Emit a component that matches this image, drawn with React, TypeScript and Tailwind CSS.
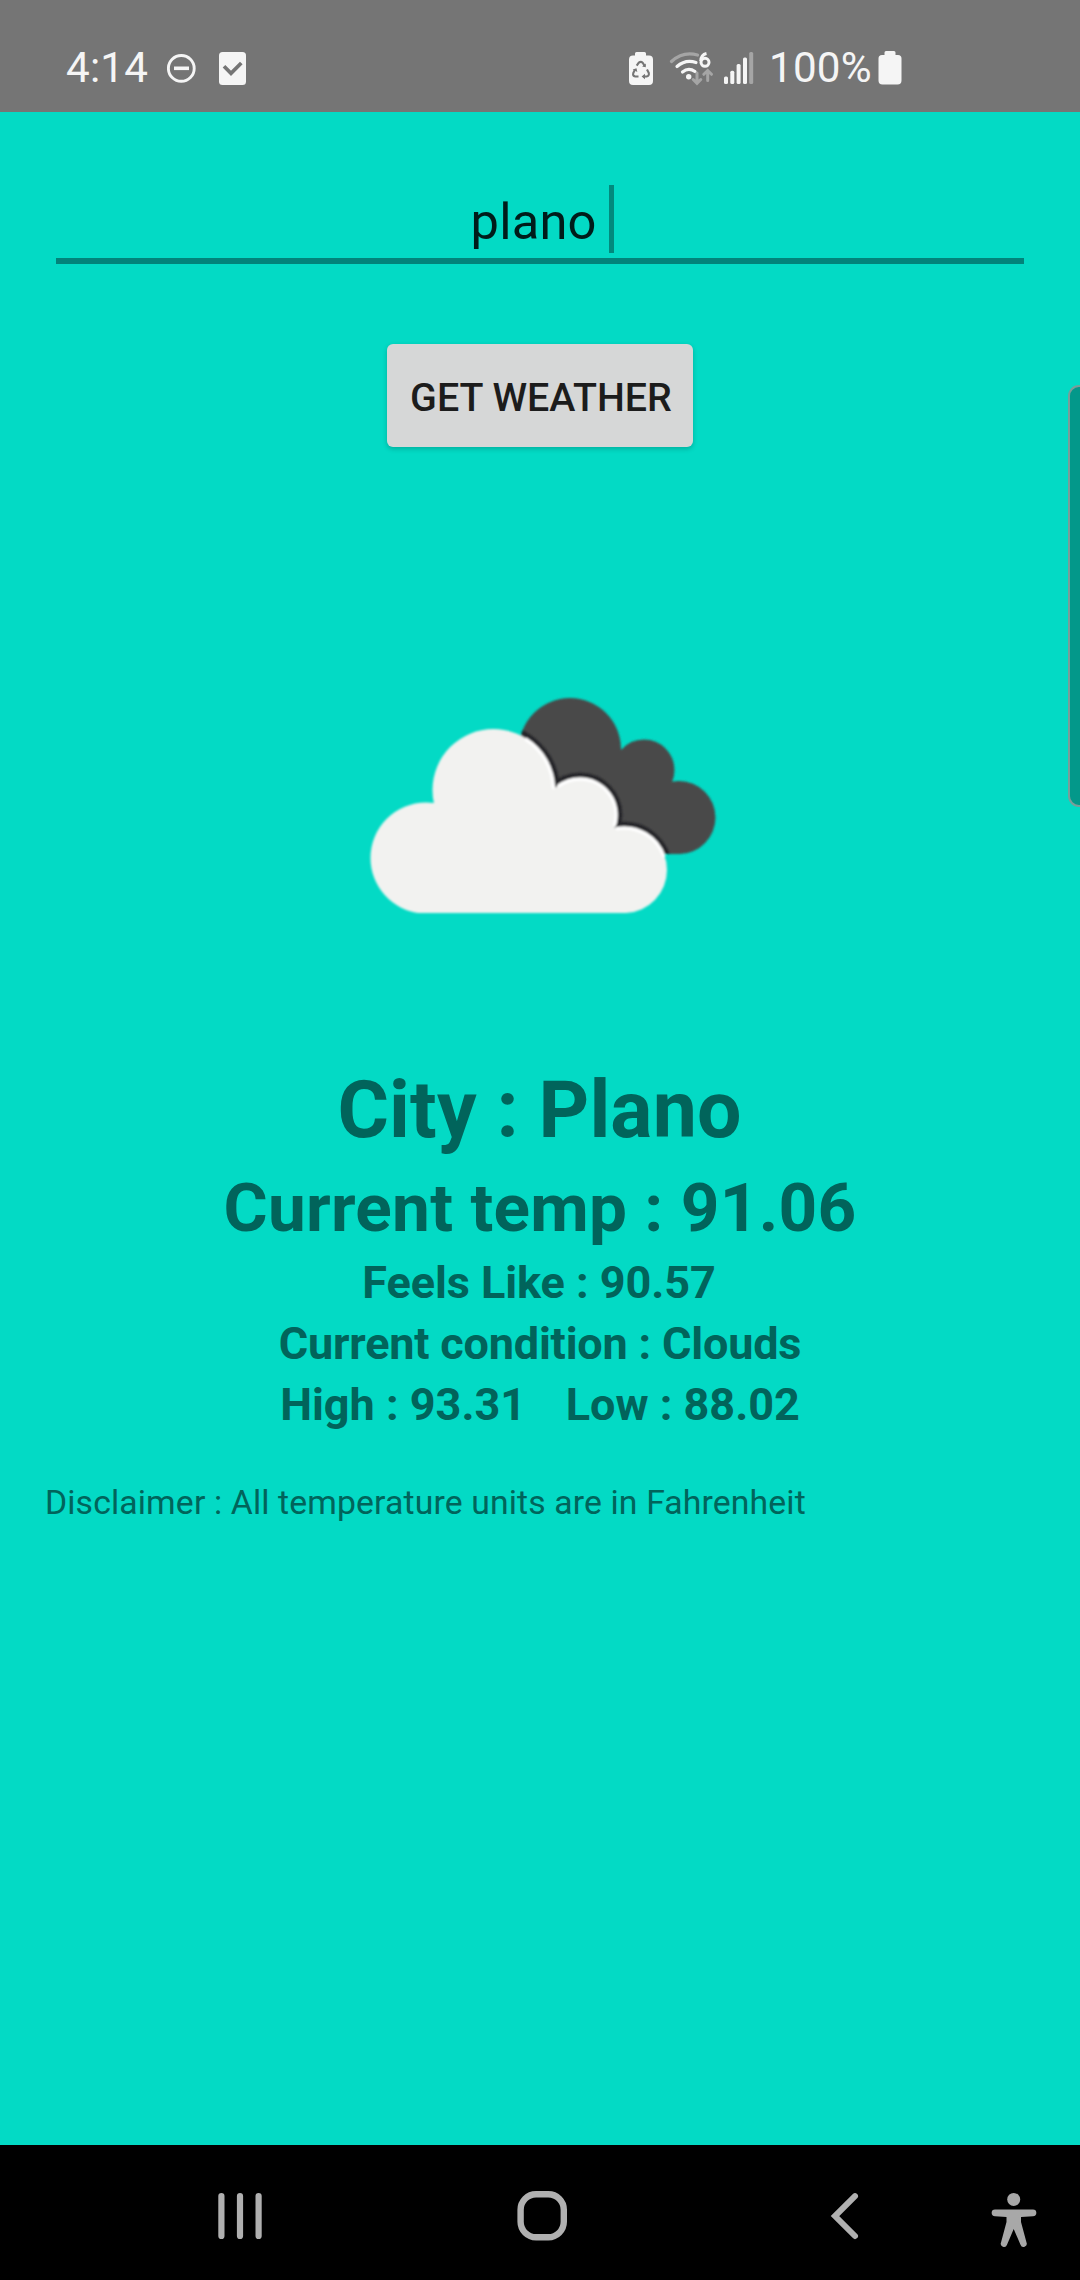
import React from "react";

function StatusBar() {
  return (
    <header className="flex h-[112px] bg-[#757575] pl-[66px] pt-[42px] text-[42.2px] leading-[51px] text-[#f5f5f5]">
      <span className="w-[82px] tracking-[0.2px]">4:14</span>
      <svg className="ml-[19px] mt-[12px] h-[30px] w-[30px]" viewBox="0 0 30 30" fill="none" stroke="#f5f5f5">
        <circle cx="14.3" cy="14.4" r="12.9" strokeWidth="2.9" />
        <path d="M7 14.3H22" strokeWidth="3.6" />
      </svg>
      <svg className="ml-[21px] mt-[9px] h-[34px] w-[28px]" viewBox="0 0 28 34">
        <rect x="1" y="1" width="27" height="33" rx="3.5" fill="#f5f5f5" />
        <path d="M6 15.3 13 22.3 23.3 12" fill="none" stroke="#757575" strokeWidth="3.7" />
      </svg>
      <svg className="ml-[382px] mt-[9px] h-[35px] w-[26px]" viewBox="0 0 26 35">
        <path d="M7 5V2.5Q7 1 8.500 1H16.500Q18 1 18 2.500V4.500H21Q25 4.500 25 8.500V30Q25 34 21 34H5Q1 34 1 30V8.500Q1 4.500 5 4.500H7Z" fill="#f5f5f5" />
        <g fill="none" stroke="#757575" strokeWidth="2.1" strokeLinejoin="round">
          <path d="M8.700 14.700 10.800 11.700Q12.800 10.200 14.700 11.700L16.700 15" />
          <path d="M19 18.500 20.800 22Q21.300 25.200 18.500 25.500H15.500" />
          <path d="M10.500 25.500H7.200Q4.400 25 5.300 22L7 18.500" />
        </g>
        <path d="M17.800 12.500V16.300L14.100 15.500ZM17 22.700V28.300L13.600 25.500ZM4.700 18.400 8.500 17.200 9.300 21Z" fill="#757575" />
      </svg>
      <svg className="ml-[14px] mt-[9px] h-[36px] w-[46px]" viewBox="0 0 46 36" fill="none" strokeLinecap="round">
        <path d="M3.500 10.500Q15 0 29.500 4" stroke="#a5a5a5" strokeWidth="3.200" />
        <g stroke="#f5f5f5" strokeWidth="3.200">
          <path d="M9 15.500Q17.500 8 28 11.500" />
          <path d="M14.500 21Q20.500 16 27 20.500" />
        </g>
        <circle cx="20.700" cy="25.700" r="2.700" fill="#f5f5f5" />
        <path d="M38.500 2.500Q33 3.700 32.800 10" stroke="#f5f5f5" strokeWidth="3" strokeLinecap="butt" />
        <circle cx="37" cy="11.300" r="4" stroke="#f5f5f5" strokeWidth="3" />
        <path d="M29 22V31M25.200 28.500 29 32.300 32.800 28.500M39.700 29.500V21M35.800 23.300 39.700 19.500 43.500 23.300" stroke="#a5a5a5" strokeWidth="3" />
      </svg>
      <svg className="ml-[9px] mt-[9px] h-[34px] w-[31px]" viewBox="0 0 31 34">
        <g fill="#f5f5f5">
          <rect x="1" y="25.500" width="4" height="7.500" rx="1.500" />
          <rect x="7.300" y="19.700" width="4" height="13.300" rx="1.500" />
          <rect x="13.600" y="13" width="4" height="20" rx="1.500" />
          <rect x="20" y="6.500" width="4" height="26.500" rx="1.500" />
        </g>
        <rect x="26.200" y="1" width="4" height="32" rx="1.500" fill="#a5a5a5" />
      </svg>
      <span className="ml-[15px] w-[102px] tracking-[0.2px]">100%</span>
      <svg className="ml-[7px] mt-[8px] h-[35px] w-[24px]" viewBox="0 0 24 35">
        <path d="M6.500 5V2.500Q6.500 1 8 1H16Q17.500 1 17.500 2.500V5H20Q23.500 5 23.500 8.500V30.500Q23.500 34.500 19.500 34.500H4.500Q.5 34.500 .5 30.500V8.500Q.5 5 4 5Z" fill="#f5f5f5" />
      </svg>
    </header>
  );
}

function CloudsIcon() {
  return (
    <svg className="mx-auto mt-[233px] h-[250px] w-[380px]" viewBox="0 0 380 250">
      <defs>
        <filter id="soften" x="-5%" y="-5%" width="110%" height="110%">
          <feGaussianBlur stdDeviation="1.2" />
        </filter>
        <clipPath id="dark-shape">
          <circle cx="220" cy="69" r="51" />
          <circle cx="294" cy="90" r="30.500" />
          <circle cx="329" cy="137.500" r="36.500" />
          <path d="M180 60H260L300 95 330 130V174H250Z" />
        </clipPath>
        <clipPath id="light-shape">
          <circle cx="76" cy="178" r="55.500" />
          <circle cx="143.500" cy="110" r="61" />
          <circle cx="230" cy="135" r="37" />
          <circle cx="274" cy="190" r="43" />
          <path d="M84 125 143 110H200L240 140 276 180V234H70V150Z" />
        </clipPath>
      </defs>
      <g filter="url(#soften)">
        <g clipPath="url(#dark-shape)">
          <rect width="380" height="250" fill="#48484a" />
          <g fill="none" stroke="#262629" strokeWidth="9">
            <circle cx="143.500" cy="110" r="62" />
            <circle cx="230" cy="135" r="38" />
            <circle cx="274" cy="190" r="44" />
          </g>
        </g>
        <g clipPath="url(#light-shape)">
          <rect width="380" height="233" fill="#f2f2f0" />
        </g>
        <g fill="none" stroke="#ffffff" strokeWidth="3.500">
          <path d="M175.300 59.100A60 60 0 0 1 203.500 109" />
          <path d="M208 106.500A36 36 0 0 1 230 99A36 36 0 0 1 264.300 146" />
          <path d="M266 148.800A42 42 0 0 1 314 177" />
        </g>
      </g>
    </svg>
  );
}

function NavigationBar() {
  return (
    <nav className="flex h-[135px] items-start bg-black pl-[217px]">
      <svg className="mt-[46px] h-[50px] w-[46px]" viewBox="0 0 46 50" stroke="#b0b0b0" strokeWidth="6.200" strokeLinecap="round">
        <path d="M4.400 5V45M23 5V45M41.600 5V45" />
      </svg>
      <svg className="ml-[253px] mt-[45px] h-[52px] w-[52px]" viewBox="0 0 52 52">
        <rect x="4.600" y="4.300" width="43.200" height="43" rx="15.500" fill="none" stroke="#b0b0b0" strokeWidth="6.400" />
      </svg>
      <svg className="ml-[262px] mt-[46px] h-[50px] w-[30px]" viewBox="0 0 30 50">
        <path d="M25 5.200 5 25 25 45" fill="none" stroke="#b0b0b0" strokeWidth="6" strokeLinecap="round" />
      </svg>
      <svg className="ml-[131px] mt-[47px] h-[56px] w-[46px]" viewBox="0 0 46 56" fill="#a8a8a8">
        <circle cx="22.700" cy="7.400" r="6.500" />
        <path d="M4 17.500H42A3.300 3.300 0 0 1 42 24.200L30 25V30L35.500 50.500A3.100 3.100 0 0 1 29.500 52.800L22.700 37 16 52.800A3.100 3.100 0 0 1 10 50.500L15.500 30V25L4 24.200A3.300 3.300 0 0 1 4 17.500Z" />
      </svg>
    </nav>
  );
}

export default function App() {
  return (
    <div className="relative flex h-[2280px] w-[1080px] flex-col overflow-hidden bg-[#03dac5] font-[Roboto,sans-serif]">
      <StatusBar />
      <main className="flex flex-1 flex-col">
        <div className="mx-[56px] mt-[73px] flex h-[79px] justify-center border-b-[6px] border-[#02837a]">
          <span className="whitespace-pre text-[50.625px] leading-[73px] tracking-[0.2px] text-[#001c1a]">{"plano "}</span>
          <span className="-mr-[5px] h-[68px] w-[5px] bg-[#028a7d]" />
        </div>
        <button className="mx-auto mt-[80px] h-[103px] w-[306px] rounded-[6px] bg-[#d6d7d7] pl-[2px] pt-[5px] text-[39.375px] font-medium leading-[98px] text-[#1c1c1c] shadow-[0_2px_5px_rgba(0,0,0,0.2)]">
          <span className="whitespace-nowrap">GET WEATHER</span>
        </button>
        <CloudsIcon />
        <section className="mt-[128px] text-center font-bold text-[#01645b]">
          <h1 className="pr-[1px] text-[78.75px] leading-[105px] tracking-[0.15px]">City : Plano</h1>
          <h2 className="text-[67.5px] leading-[90px] tracking-[0.28px]">Current temp : 91.06</h2>
          <p className="pr-[2px] text-[45px] leading-[60px] tracking-[-0.07px]">Feels Like : 90.57</p>
          <p className="text-[45px] leading-[61px] tracking-[-0.2px]">Current condition : Clouds</p>
          <p className="whitespace-pre text-[45px] leading-[61px]">
            <span className="mr-[6px]">{"High : 93.31   "}</span>
            <span>Low : 88.02</span>
          </p>
        </section>
        <p className="mt-[45px] pl-[45px] text-[33.75px] leading-[45px] tracking-[0.13px] text-[#01645b]">
          Disclaimer : All temperature units are in Fahrenheit
        </p>
      </main>
      <NavigationBar />
      <div className="absolute -right-[10px] top-[385px] h-[422px] w-[22px] rounded-[13px] border-[2.500px] border-[#7a9d99] bg-[#03988a]" />
    </div>
  );
}
